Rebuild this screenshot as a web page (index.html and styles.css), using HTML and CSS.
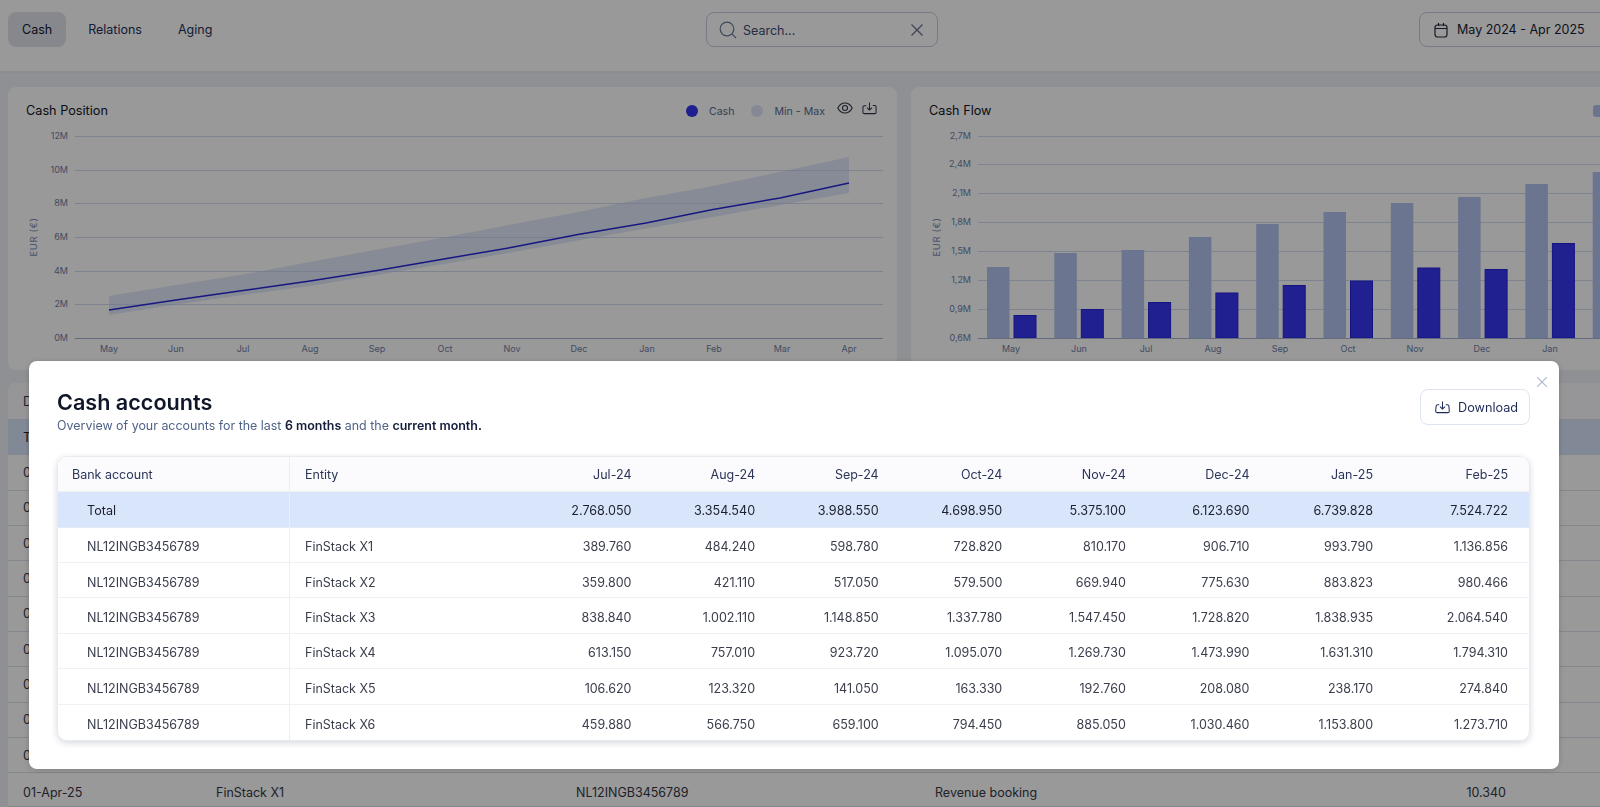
FILE: index.html
```html
<!DOCTYPE html>
<html lang="en">
<head>
<meta charset="utf-8">
<title>Cash accounts</title>
<link rel="stylesheet" href="styles.css">
</head>
<body>
<div class="page">
  <header class="topbar">
    <nav class="tabs">
      <a class="tab tab-active">Cash</a>
      <a class="tab">Relations</a>
      <a class="tab">Aging</a>
    </nav>
    <div class="search">
      <svg class="search-icon" viewBox="0 0 18 18"><circle cx="8" cy="8" r="6.8"/><path d="M12.9 12.9 17 17"/></svg>
      <span class="search-text">Search...</span>
      <svg class="search-x" viewBox="0 0 12 12"><path d="M.5.5l11 11M11.5.5l-11 11"/></svg>
    </div>
    <div class="date">
      <svg class="date-icon" viewBox="0 0 14 16"><rect x="1" y="3" width="12" height="12" rx="2.5"/><path d="M1 6.5h12M4.5 1v3M9.5 1v3"/></svg>
      <span>May 2024 - Apr 2025</span>
    </div>
  </header>

  <main class="content">
    <section class="charts">
      <article class="card">
        <div class="card-head">
          <h2 class="card-title">Cash Position</h2>
          <div class="legend">
            <span class="dot dot-cash"></span><span class="legend-label">Cash</span>
            <span class="dot dot-range"></span><span class="legend-label">Min - Max</span>
            <svg class="eye" viewBox="0 0 16 12"><path d="M.8 6C2.5 2.6 5 1 8 1s5.500 1.600 7.200 5C13.500 9.400 11 11 8 11S2.500 9.400.8 6z"/><circle cx="8" cy="6" r="2.500"/></svg>
            <svg class="tray" viewBox="0 0 16 14"><path d="M4.500 4.500H2.300A1.300 1.300 0 0 0 1 5.800v6A1.300 1.300 0 0 0 2.300 13h11.400a1.300 1.300 0 0 0 1.300-1.300v-6a1.300 1.300 0 0 0-1.300-1.300h-2.200M8 1v8M5.300 6.500 8 9.200l2.700-2.700"/></svg>
          </div>
        </div>
        <svg class="chart" viewBox="8 125 889 245">
          <g class="grid">
            <path d="M75 136H883M75 170H883M75 203H883M75 237H883M75 271H883M75 304H883"/>
          </g>
          <path class="baseline" d="M75 338H883"/>
          <g class="ylabels">
            <text x="68" y="139">12M</text><text x="68" y="173">10M</text><text x="68" y="206">8M</text><text x="68" y="240">6M</text><text x="68" y="274">4M</text><text x="68" y="307">2M</text><text x="68" y="341">0M</text>
          </g>
          <text class="ytitle" transform="translate(37 237) rotate(-90)">EUR (€)</text>
          <path class="band" d="M109 296L176 285L243 274.500L310 262L377 249.500L444 237.500L511 224.500L578 212L646 198L713 186L780 172L849 157V193L780 205L713 217L646 228.500L578 240.500L511 252.500L444 264L377 275L310 286L243 295L176 304.500L109 315Z"/>
          <path class="line" d="M109 310L176 300L243 290.500L310 281L377 270.500L444 259L511 247.500L578 234.500L646 223L713 209.500L780 198L849 183"/>
          <g class="xlabels">
            <text x="109" y="352">May</text><text x="176" y="352">Jun</text><text x="243" y="352">Jul</text><text x="310" y="352">Aug</text><text x="377" y="352">Sep</text><text x="445" y="352">Oct</text><text x="512" y="352">Nov</text><text x="579" y="352">Dec</text><text x="647" y="352">Jan</text><text x="714" y="352">Feb</text><text x="782" y="352">Mar</text><text x="849" y="352">Apr</text>
          </g>
        </svg>
      </article>

      <article class="card">
        <div class="card-head">
          <h2 class="card-title">Cash Flow</h2>
          <div class="legend legend-flow">
            <span class="swatch"></span>
          </div>
        </div>
        <svg class="chart" viewBox="911 125 889 245">
          <g class="grid">
            <path d="M978 136H1790M978 164H1790M978 193H1790M978 222H1790M978 251H1790M978 280H1790M978 309H1790"/>
          </g>
          <g class="ylabels">
            <text x="971" y="139">2,7M</text><text x="971" y="167">2,4M</text><text x="971" y="196">2,1M</text><text x="971" y="225">1,8M</text><text x="971" y="254">1,5M</text><text x="971" y="283">1,2M</text><text x="971" y="312">0,9M</text><text x="971" y="341">0,6M</text>
          </g>
          <text class="ytitle" transform="translate(940 237) rotate(-90)">EUR (€)</text>
          <g class="bars-light">
            <rect x="987" y="267" width="22.500" height="71"/><rect x="1054.300" y="253" width="22.500" height="85"/><rect x="1121.600" y="250" width="22.500" height="88"/><rect x="1188.900" y="237" width="22.500" height="101"/><rect x="1256.200" y="224" width="22.500" height="114"/><rect x="1323.500" y="212" width="22.500" height="126"/><rect x="1390.800" y="203" width="22.500" height="135"/><rect x="1458.100" y="197" width="22.500" height="141"/><rect x="1525.400" y="184" width="22.500" height="154"/><rect x="1592.700" y="172" width="22.500" height="166"/>
          </g>
          <g class="bars-dark">
            <rect x="1014" y="315.500" width="22" height="22.500"/><rect x="1081.300" y="309.500" width="22" height="28.500"/><rect x="1148.600" y="302.500" width="22" height="35.500"/><rect x="1215.900" y="293" width="22" height="45"/><rect x="1283.200" y="285.500" width="22" height="52.500"/><rect x="1350.500" y="281" width="22" height="57"/><rect x="1417.800" y="268" width="22" height="70"/><rect x="1485.100" y="269.500" width="22" height="68.500"/><rect x="1552.400" y="243.500" width="22" height="94.500"/>
          </g>
          <path class="baseline" d="M978 338H1790"/>
          <g class="xlabels">
            <text x="1011" y="352">May</text><text x="1079" y="352">Jun</text><text x="1146" y="352">Jul</text><text x="1213" y="352">Aug</text><text x="1280" y="352">Sep</text><text x="1348" y="352">Oct</text><text x="1415" y="352">Nov</text><text x="1482" y="352">Dec</text><text x="1550" y="352">Jan</text>
          </g>
        </svg>
      </article>
    </section>

    <section class="ledger">
      <div class="ledger-row ledger-head"><span class="peek">Date</span></div>
      <div class="ledger-row ledger-total"><span class="peek">Total</span></div>
      <div class="ledger-row"><span class="peek">01-Apr-25</span></div>
      <div class="ledger-row"><span class="peek">01-Apr-25</span></div>
      <div class="ledger-row"><span class="peek">01-Apr-25</span></div>
      <div class="ledger-row"><span class="peek">01-Apr-25</span></div>
      <div class="ledger-row"><span class="peek">01-Apr-25</span></div>
      <div class="ledger-row"><span class="peek">01-Apr-25</span></div>
      <div class="ledger-row"><span class="peek">01-Apr-25</span></div>
      <div class="ledger-row"><span class="peek">01-Apr-25</span></div>
      <div class="ledger-row"><span class="peek">01-Apr-25</span></div>
      <div class="ledger-row"><span>01-Apr-25</span><span>FinStack X1</span><span>NL12INGB3456789</span><span>Revenue booking</span><span class="num">10.340</span></div>
    </section>
  </main>
</div>

<div class="scrim">
  <div class="modal">
    <svg class="modal-close" viewBox="0 0 10 10"><path d="M.3.3l9.400 9.400M9.700.3.300 9.700"/></svg>
    <div class="modal-head">
      <div>
        <h1 class="modal-title">Cash accounts</h1>
        <p class="modal-sub">Overview of your accounts for the last <b>6 months</b> and the <b>current month.</b></p>
      </div>
      <button class="download">
        <svg class="download-icon" viewBox="0 0 16 14"><path d="M4.500 4.500H2.800A1.800 1.800 0 0 0 1.200 5.800L.8 10.500v1A1.500 1.500 0 0 0 2.300 13h11.400a1.500 1.500 0 0 0 1.500-1.500v-1l-.4-4.700a1.800 1.800 0 0 0-1.600-1.300h-1.700M8 1v8M5.300 6.500 8 9.200l2.700-2.700"/></svg>
        Download
      </button>
    </div>
    <div class="accounts">
      <div class="acc-row acc-head"><span>Bank account</span><span>Entity</span><span>Jul-24</span><span>Aug-24</span><span>Sep-24</span><span>Oct-24</span><span>Nov-24</span><span>Dec-24</span><span>Jan-25</span><span>Feb-25</span></div>
      <div class="acc-row acc-total"><span>Total</span><span></span><span>2.768.050</span><span>3.354.540</span><span>3.988.550</span><span>4.698.950</span><span>5.375.100</span><span>6.123.690</span><span>6.739.828</span><span>7.524.722</span></div>
      <div class="acc-row"><span>NL12INGB3456789</span><span>FinStack X1</span><span>389.760</span><span>484.240</span><span>598.780</span><span>728.820</span><span>810.170</span><span>906.710</span><span>993.790</span><span>1.136.856</span></div>
      <div class="acc-row"><span>NL12INGB3456789</span><span>FinStack X2</span><span>359.800</span><span>421.110</span><span>517.050</span><span>579.500</span><span>669.940</span><span>775.630</span><span>883.823</span><span>980.466</span></div>
      <div class="acc-row"><span>NL12INGB3456789</span><span>FinStack X3</span><span>838.840</span><span>1.002.110</span><span>1.148.850</span><span>1.337.780</span><span>1.547.450</span><span>1.728.820</span><span>1.838.935</span><span>2.064.540</span></div>
      <div class="acc-row"><span>NL12INGB3456789</span><span>FinStack X4</span><span>613.150</span><span>757.010</span><span>923.720</span><span>1.095.070</span><span>1.269.730</span><span>1.473.990</span><span>1.631.310</span><span>1.794.310</span></div>
      <div class="acc-row"><span>NL12INGB3456789</span><span>FinStack X5</span><span>106.620</span><span>123.320</span><span>141.050</span><span>163.330</span><span>192.760</span><span>208.080</span><span>238.170</span><span>274.840</span></div>
      <div class="acc-row"><span>NL12INGB3456789</span><span>FinStack X6</span><span>459.880</span><span>566.750</span><span>659.100</span><span>794.450</span><span>885.050</span><span>1.030.460</span><span>1.153.800</span><span>1.273.710</span></div>
    </div>
  </div>
</div>
</body>
</html>
```

FILE: styles.css
```css
* { box-sizing: border-box; }
html, body { margin: 0; height: 100%; overflow: hidden; }
body { font-family: Inter, "Liberation Sans", sans-serif; font-size: 12.500px; background: #eff1f5; color: #1d2233; }

.page { width: 1808px; }

.topbar {
  display: flex;
  align-items: flex-start;
  height: 73px;
  padding: 12px 8px 0;
  background: #fff;
  border-bottom: 2px solid #e9ebf0;
}
.tabs { display: flex; gap: 8px; width: 230px; }
.tab { display: flex; align-items: center; height: 35px; padding: 0 14px; border-radius: 8px; font-weight: 400; color: #22305a; }
.tab-active { background: #dfe3ec; color: #11162a; }

.search {
  display: flex;
  align-items: center;
  width: 232px;
  height: 35px;
  margin-left: 468px;
  padding: 0 14px 0 12px;
  border: 1px solid #c5cde2;
  border-radius: 8px;
}
.search-icon { width: 18px; height: 18px; fill: none; stroke: #6a7896; stroke-width: 1.2; }
.search-text { margin-left: 6px; color: #3e4c74; position: relative; top: 1px; }
.search-x { width: 12px; height: 12px; margin-left: auto; fill: none; stroke: #64708e; stroke-width: 1.2; }

.date {
  display: flex;
  align-items: center;
  gap: 9px;
  width: 190px;
  height: 35px;
  margin-left: 481px;
  padding-left: 14px;
  border: 1px solid #c5cde2;
  border-radius: 8px;
  font-weight: 400;
  color: #171d33;
}
.date-icon { width: 14px; height: 16px; fill: none; stroke: #232a40; stroke-width: 1.2; }

.content { padding: 14px 8px 0; }
.charts { display: grid; grid-template-columns: 889px 889px; gap: 14px; }

.card { height: 283px; background: #fff; border-radius: 8px; overflow: hidden; }
.card-head { display: flex; align-items: flex-start; justify-content: space-between; height: 38px; padding: 16px 20px 0 18px; }
.card-title { margin: 0; font-size: 12.700px; line-height: 16px; font-weight: 400; color: #11151f; }

.legend { display: flex; align-items: center; height: 18px; margin-top: -1px; font-size: 10.600px; color: #5a6a94; }
.legend-label { margin-left: 11px; }
.dot { width: 12px; height: 12px; border-radius: 50%; }
.dot-cash { background: #3333f0; }
.dot-range { margin-left: 17px; background: #dfe5f8; }
.eye { width: 16px; height: 12px; margin: -6px 0 0 12px; fill: none; stroke: #2d3548; stroke-width: 1.1; }
.tray { width: 15px; height: 14px; margin: -6px 0 0 9px; fill: none; stroke: #2d3548; stroke-width: 1.1; }
.legend-flow { margin-right: 171px; }
.swatch { width: 16px; height: 12px; border-radius: 3px; background: #b4c4ee; }

.chart { display: block; width: 889px; height: 245px; font-family: Inter, "Liberation Sans", sans-serif; }
.grid path { fill: none; stroke: #d3dbf0; stroke-width: 1; shape-rendering: crispEdges; }
.baseline { fill: none; stroke: #a7b3d3; stroke-width: 1; shape-rendering: crispEdges; }
.ylabels text { font-size: 9px; fill: #6e7da6; text-anchor: end; }
.xlabels text { font-size: 9px; fill: #6e7da6; text-anchor: middle; }
.ytitle { font-size: 9.500px; letter-spacing: .6px; fill: #7e8db5; text-anchor: middle; }
.band { fill: rgba(190, 205, 240, .45); }
.line { fill: none; stroke: #2727d8; stroke-width: 1.500; stroke-linejoin: round; }
.bars-light rect { fill: #b4c4ee; }
.bars-dark rect { fill: #3636f0; stroke: #2222d8; stroke-width: 1; }

.ledger { width: 1792px; margin-top: 13px; background: #fff; border-radius: 8px 8px 0 0; overflow: hidden; }
.ledger-row {
  display: grid;
  grid-template-columns: 193px 360px 359px 465px 121px 1fr;
  align-items: center;
  height: 35.330px;
  padding-left: 15px;
  border-bottom: 1px solid #dbe0ec;
  color: #343846;
}
.ledger-row:last-child { height: 34px; padding-top: 5px; }
.ledger-head { height: 37px; background: #fbfbfe; color: #2b3a63; }
.ledger-total { background: #d9e5fb; color: #1d2233; }
.peek { width: 6px; overflow: hidden; white-space: nowrap; }
.num { text-align: right; padding-right: 15px; }

.scrim {
  position: fixed;
  inset: 0;
  padding: 361px 41px 38px 29px;
  background: rgba(0, 0, 0, .4);
}
.modal {
  position: relative;
  height: 408px;
  padding: 28px 29px 0 28px;
  background: #fff;
  border-radius: 8px;
  box-shadow: 0 1px 6px rgba(0, 0, 0, .18);
}
.modal-close { position: absolute; top: 16px; right: 12px; width: 10px; height: 10px; fill: none; stroke: #a9b5d1; stroke-width: 1.100; }
.modal-head { display: flex; justify-content: space-between; align-items: flex-start; height: 67px; }
.modal-title { margin: 0; font-size: 21.600px; line-height: 26px; font-weight: 600; color: #10162a; }
.modal-sub { margin: 2px 0 0; font-size: 12.450px; line-height: 18px; color: #4f6288; }
.modal-sub b { font-weight: 600; color: #141d3a; }

.download {
  display: flex;
  align-items: center;
  gap: 8px;
  width: 110px;
  height: 36px;
  padding: 0 0 0 14px;
  background: #fff;
  border: 1px solid #dde3f1;
  border-radius: 8px;
  font: 400 12.700px Inter, "Liberation Sans", sans-serif;
  color: #1f2c58;
}
.download-icon { width: 15px; height: 14px; fill: none; stroke: #1f2c58; stroke-width: 1.100; }

.accounts {
  border: 1px solid #e9ebf3;
  border-radius: 10px;
  overflow: hidden;
  box-shadow: 0 2px 6px rgba(30, 40, 80, .18);
}
.acc-row {
  display: grid;
  grid-template-columns: 232px 217.900px repeat(7, 123.600px) 1fr;
  align-items: center;
  height: 35.360px;
  border-bottom: 1px solid #f0f1f7;
  color: #3a3e4c;
}
.acc-row:last-child { border-bottom: 0; }
.acc-row span { padding-top: 4px; text-align: right; white-space: nowrap; }
.acc-row span:last-child { padding-right: 21px; }
.acc-row span:first-child { display: flex; align-items: center; height: 100%; padding-left: 29px; border-right: 1px solid #eceef5; }
.acc-row span:nth-child(2) { display: flex; align-items: center; height: 100%; padding-left: 15px; }
.acc-head { background: #fbfbfe; color: #2a3557; }
.acc-head span { padding-top: 0; }
.acc-head span:first-child { padding-left: 14px; }
.acc-total { background: #d9e5fb; color: #1b1f2e; font-size: 12.600px; border-bottom-color: #e4eaf8; }
.acc-total span { padding-top: 2px; }
```
